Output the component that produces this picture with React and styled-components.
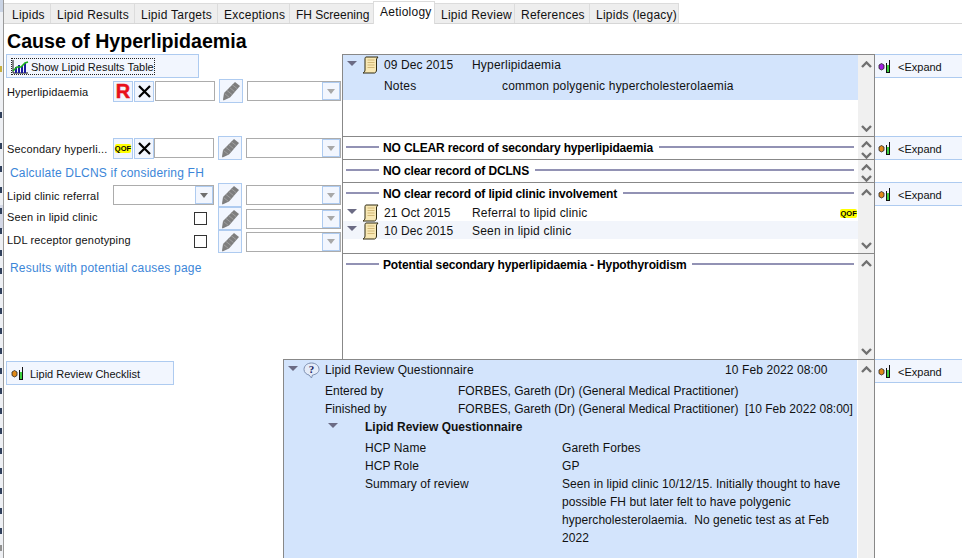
import React from "react";
import styled, { createGlobalStyle } from "styled-components";

const GlobalStyle = createGlobalStyle`
  html, body {
    margin: 0;
    padding: 0;
    background: #fff;
  }
  body {
    font-family: "Liberation Sans", Arial, sans-serif;
    font-size: 12px;
    color: #111;
  }
`;

const Page = styled.div`
  display: flex;
  width: 962px;
  height: 558px;
  overflow: hidden;
  background: #fff;
`;

const Strip = styled.div`
  width: 4px;
  height: 558px;
  box-sizing: border-box;
  overflow: hidden;
  background: #eef0f4;
  border-right: 1px solid #9a9a9a;
  flex: none;

  svg {
    display: block;
  }
`;

const Main = styled.div`
  flex: 1;
  display: flex;
  flex-direction: column;
  min-width: 0;
`;

const TabBar = styled.div`
  display: flex;
  align-items: flex-end;
  height: 24px;
  box-sizing: border-box;
  border-bottom: 1px solid #d6d6d6;
`;

const Tab = styled.div`
  height: 20px;
  width: ${(p) => p.$w}px;
  box-sizing: border-box;
  padding-left: ${(p) => p.$pad || 6}px;
  padding-top: 4px;
  background: #eeeeee;
  border: 1px solid #dcdcdc;
  border-left: none;
  border-bottom: none;
  font-size: 12px;
  letter-spacing: ${(p) => p.$spacing ?? 0.25}px;
  white-space: nowrap;
  line-height: 14px;

  ${(p) =>
    p.$active &&
    `
    height: 23px;
    margin-bottom: -1px;
    padding-top: 3px;
    background: #fff;
    box-shadow: -1px 0 0 #dcdcdc;
    position: relative;
  `}
`;

const TopArea = styled.div`
  display: flex;
  height: 335px;
`;

const LeftCol = styled.div`
  width: 338px;
  flex: none;
  padding-left: 2px;
  box-sizing: border-box;
`;

const Title = styled.h1`
  margin: 7px 0 2px 1px;
  height: 21px;
  font-size: 19.6px;
  line-height: 21px;
  font-weight: 700;
  color: #000;
`;

const ToolButton = styled.div`
  display: flex;
  align-items: center;
  gap: 6px;
  width: ${(p) => p.$w}px;
  height: 24px;
  box-sizing: border-box;
  padding: 1px 0 0 4px;
  background: #f2f6fe;
  border: 1px solid #aecbf0;
  font-size: 11px;
  white-space: nowrap;
`;

const FocusBox = styled.div`
  display: flex;
  align-items: center;
  gap: 2px;
  height: 15px;
  border: 1px dotted #222;
`;

const FieldRow = styled.div`
  display: flex;
  align-items: center;
  height: ${(p) => p.$h || 24}px;
  margin-top: ${(p) => p.$top || 0}px;
`;

const FieldLabel = styled.div`
  width: 106px;
  flex: none;
  padding-left: 1px;
  padding-top: ${(p) => (p.$lift ? 0 : 2)}px;
  padding-bottom: ${(p) => p.$lift || 0}px;
  font-size: 11px;
  letter-spacing: 0.16px;
  white-space: nowrap;
`;

const SquareButton = styled.div`
  width: 20px;
  height: 21px;
  box-sizing: border-box;
  margin-right: ${(p) => (p.$flush ? 0 : 1)}px;
  flex: none;
  display: flex;
  align-items: center;
  justify-content: center;
  background: #f2f6fe;
  border: 1px solid #aecbf0;
`;

const RedLetter = styled.span`
  font-size: 20px;
  line-height: 18px;
  font-weight: 700;
  color: #e8101c;
  -webkit-text-stroke: 0.5px #e8101c;
`;

const TextInput = styled.div`
  width: ${(p) => p.$w || 60}px;
  height: 20px;
  box-sizing: border-box;
  background: #fff;
  border: 1px solid #acacac;
  flex: none;
`;

const PenButton = styled.div`
  width: 24px;
  height: ${(p) => p.$h || 24}px;
  box-sizing: border-box;
  flex: none;
  margin: 0 4px;
  display: flex;
  align-items: center;
  justify-content: center;
  background: #f2f6fe;
  border: 1px solid #aecbf0;
`;

const SelectBox = styled.div`
  width: ${(p) => p.$w || 95}px;
  height: 20px;
  box-sizing: border-box;
  background: #fff;
  border: 1px solid #acacac;
  flex: none;
  display: flex;
  justify-content: flex-end;
`;

const SelectArrow = styled.div`
  width: 16px;
  display: flex;
  align-items: center;
  justify-content: center;
  background: #f2f6fe;
  border: 1px solid #aecbf0;

  &::after {
    content: "";
    border-left: 4px solid transparent;
    border-right: 4px solid transparent;
    border-top: 5px solid ${(p) => (p.$dark ? "#6f6f6f" : "#a8a8a8")};
  }
`;

const LinkText = styled.div`
  margin: ${(p) => p.$margin};
  padding-left: 4px;
  height: 16px;
  line-height: 16px;
  font-size: 12px;
  letter-spacing: 0.2px;
  color: #3c86d8;
`;

const CheckBox = styled.div`
  width: 13px;
  height: 13px;
  box-sizing: border-box;
  margin-left: 81px;
  margin-right: 7px;
  border: 1px solid #333;
  background: #fff;
  flex: none;
`;

const Stack = styled.div`
  flex: 1;
  display: flex;
  flex-direction: column;
  padding-top: 30px;
  min-width: 0;
`;

const SectionRow = styled.div`
  display: flex;
  height: ${(p) => p.$h}px;
`;

const Pane = styled.div`
  width: 533px;
  flex: none;
  box-sizing: border-box;
  display: flex;
  border-left: 1px solid #888;
  border-right: 1px solid #888;
  border-top: 1px solid #888;
`;

const PaneBody = styled.div`
  flex: 1;
  min-width: 0;
  overflow: hidden;
`;

const ScrollCol = styled.div`
  width: 16px;
  flex: none;
  display: flex;
  flex-direction: column;
  justify-content: space-between;
  align-items: center;
  box-sizing: border-box;
  padding: ${(p) => (p.$tight ? "4px 0 0" : "6px 0 4px")};
  background: #f0f0f0;
`;

const Side = styled.div`
  flex: 1;
  min-width: 0;
`;

const ExpandButton = styled.div`
  display: flex;
  align-items: center;
  gap: 7px;
  height: 24px;
  box-sizing: border-box;
  padding: 1px 0 0 3px;
  background: #f2f6fe;
  border-top: 1px solid #aecbf0;
  border-bottom: 1px solid #aecbf0;
  font-size: 11px;
  color: #111;
`;

const RecordBlock = styled.div`
  background: #d3e4fc;
  height: 45px;
`;

const Line = styled.div`
  display: flex;
  align-items: center;
  height: ${(p) => p.$h || 18}px;
  box-sizing: border-box;
  padding-top: ${(p) => p.$nudge || 0}px;
  background: ${(p) => p.$bg || "transparent"};
  font-size: 12px;
  letter-spacing: ${(p) => p.$spacing ?? 0.2}px;
  white-space: nowrap;

  svg {
    flex: none;
  }
`;

const Caret = styled.span`
  width: 0;
  height: 0;
  flex: none;
  margin: ${(p) => p.$margin || "0 5px 4px 4px"};
  border-left: 5px solid transparent;
  border-right: 5px solid transparent;
  border-top: 5px solid #6b6b84;
`;

const DateCell = styled.span`
  width: 88px;
  flex: none;
  margin-left: 5px;
  letter-spacing: 0.1px;
`;

const NoteLabel = styled.span`
  width: 118px;
  flex: none;
  margin-left: 41px;
`;

const Heading = styled.div`
  display: flex;
  align-items: center;
  gap: 4px;
  height: 22px;
  padding: 0 4px 0 3px;
  font-size: 12px;
  font-weight: 700;
  letter-spacing: -0.14px;
  white-space: nowrap;
  color: #000;

  &::after {
    content: "";
    flex: 1;
    height: 2px;
    margin-left: 2px;
    margin-bottom: 2px;
    background: #9292b4;
  }
`;

const HeadingRule = styled.span`
  width: 33px;
  height: 2px;
  flex: none;
  margin-bottom: 2px;
  background: #9292b4;
`;

const QofBadge = styled.span`
  display: inline-block;
  height: 9px;
  line-height: 9px;
  margin-left: ${(p) => (p.$end ? "auto" : "0")};
  margin-right: ${(p) => (p.$end ? "1px" : "0")};
  background: #ffff00;
  border-radius: 2px;
  font-size: 7.5px;
  font-weight: 700;
  letter-spacing: 0.1px;
  color: #000;
`;

const BottomArea = styled.div`
  display: flex;
  flex: 1;
  min-height: 0;
`;

const BottomLeft = styled.div`
  width: 279px;
  flex: none;
  padding: 2px 0 0 2px;
  box-sizing: border-box;
`;

const QuestionPane = styled(Pane)`
  width: 592px;
`;

const QuestionBody = styled(PaneBody)`
  background: #d3e4fc;
  margin-right: 1px;
  padding-top: 1px;
`;

const QLine = styled(Line)`
  padding-left: ${(p) => p.$pad || 41}px;
`;

const QLabel = styled.span`
  width: ${(p) => p.$w}px;
  flex: none;
  margin-left: ${(p) => p.$left || 0}px;
`;

const QParagraph = styled.div`
  display: flex;
  padding-left: 81px;
  font-size: 12px;
  letter-spacing: 0.06px;
  line-height: 18px;
`;

const QText = styled.div`
  width: 285px;
`;

const ChartIcon = () => (
  <svg width="17" height="14" viewBox="0 0 17 14">
    <path d="M1 0v13h15" stroke="#111" fill="none" />
    <path d="M4 7v6M7 5v8M10 6v7M13 3v10" stroke="#1a1a9c" strokeWidth="2" />
    <path d="M1 11l4-4 4 0 4-4 3-1" stroke="#18b018" strokeWidth="1.5" fill="none" />
  </svg>
);

const CrossIcon = () => (
  <svg width="13" height="13" viewBox="0 0 13 13">
    <path d="M1 1l11 11M12 1L1 12" stroke="#000" strokeWidth="2.2" />
  </svg>
);

const PenIcon = () => (
  <svg width="19" height="20" viewBox="0 0 19 20">
    <path d="M13 1l5 4-10 11.500-6.500 3-.5-1 1-6.500z" fill="#7e7e7e" />
    <path d="M2.500 12.500l5 4M5 9.500l5 4M7.500 6.500l5 4M10 3.500l5 4" stroke="#a3a3a3" strokeWidth="0.9" />
  </svg>
);

const ScrollIcon = () => (
  <svg width="17" height="18" viewBox="0 0 17 18">
    <path d="M4 1h12l-1.500 2v11c0 1.500-1 3-2 3H1c1-.5 2-1.500 2-3V3c0-1 .4-2 1-2z" fill="#f8e8b4" stroke="#2e2a12" />
    <path d="M5.500 4h7M5.500 6.500h7M5.500 9h7M5.500 11.500h7" stroke="#d2b878" />
  </svg>
);

const VialIcon = ({ color }) => (
  <svg width="13" height="13" viewBox="0 0 13 13">
    <path d="M3.500 3.500l2.500 1.500v3.500L3.500 10 1 8.500V5z" fill={color} stroke="#222" strokeWidth="0.8" />
    <path d="M8.500 3v9M11.500 0v12.500" stroke="#111" />
    <path d="M10 5v7" stroke="#3ed03e" strokeWidth="2" />
    <path d="M8 12.500h4" stroke="#111" />
  </svg>
);

const QuestionIcon = () => (
  <svg width="17" height="17" viewBox="0 0 17 17">
    <path d="M8.500 1C4.500 1 1 3.500 1 7.500c0 3 2.500 5 5 5.500l2.500 3 1-3c3.500-.5 6.500-2.500 6.500-5.500C16 3.500 12.500 1 8.500 1z" fill="#e4ebf8" stroke="#7d8fb0" />
    <text x="8.500" y="11" fontSize="11" fontWeight="700" textAnchor="middle" fontFamily="Liberation Serif, serif" fill="#16205e">?</text>
  </svg>
);

const Chevron = ({ down }) => (
  <svg width="11" height="7" viewBox="0 0 11 7">
    <path d={down ? "M1 1l4.500 4.500L10 1" : "M1 6l4.500-4.500L10 6"} stroke="#707070" strokeWidth="2.4" fill="none" />
  </svg>
);

// slivers of the window behind, showing down the left edge
const behindMarks = [
  [66, "#c8b040"], [112, "#30405c"], [143, "#30405c"], [166, "#30405c"], [187, "#30405c"],
  [208, "#30405c"], [228, "#30405c"], [250, "#30405c"], [268, "#30405c"], [288, "#30405c"],
  [308, "#30405c"], [328, "#30405c"], [348, "#30405c"], [368, "#30405c"], [388, "#30405c"],
  [408, "#30405c"], [428, "#30405c"], [448, "#30405c"], [468, "#30405c"], [488, "#30405c"],
  [508, "#30405c"], [528, "#30405c"], [545, "#909090"],
];

const BehindWindow = () => (
  <svg width="3" height="558" viewBox="0 0 3 558">
    <rect x="0" y="0" width="3" height="12" fill="#c9d3e4" />
    <rect x="0" y="205" width="3" height="24" fill="#d4d8e6" />
    {behindMarks.map(([y, color]) => (
      <rect key={y} x="0" y={y} width="2" height="6" fill={color} />
    ))}
  </svg>
);

const Scroll = ({ tight, upOnly }) => (
  <ScrollCol $tight={tight}>
    <Chevron />
    {!upOnly && <Chevron down />}
  </ScrollCol>
);

const Expand = ({ color = "#e08a1a" }) => (
  <ExpandButton>
    <VialIcon color={color} />
    <span>&lt;Expand</span>
  </ExpandButton>
);

const tabs = [
  { label: "Lipids", w: 47, pad: 8 },
  { label: "Lipid Results", w: 84 },
  { label: "Lipid Targets", w: 83 },
  { label: "Exceptions", w: 72 },
  { label: "FH Screening", w: 84, spacing: 0 },
  { label: "Aetiology", w: 61, active: true },
  { label: "Lipid Review", w: 80 },
  { label: "References", w: 75 },
  { label: "Lipids (legacy)", w: 89 },
];

function Dropdown({ w }) {
  return (
    <SelectBox $w={w}>
      <SelectArrow />
    </SelectBox>
  );
}

export default function App() {
  return (
    <>
      <GlobalStyle />
      <Page>
        <Strip>
          <BehindWindow />
        </Strip>
        <Main>
          <TabBar>
            {tabs.map((t) => (
              <Tab key={t.label} $w={t.w} $active={t.active} $pad={t.pad} $spacing={t.spacing}>
                {t.label}
              </Tab>
            ))}
          </TabBar>
          <TopArea>
            <LeftCol>
              <Title>Cause of Hyperlipidaemia</Title>
              <ToolButton $w={193}>
                <FocusBox>
                  <ChartIcon />
                  <span>Show Lipid Results Table</span>
                </FocusBox>
              </ToolButton>
              <FieldRow $top={1}>
                <FieldLabel>Hyperlipidaemia</FieldLabel>
                <SquareButton>
                  <RedLetter>R</RedLetter>
                </SquareButton>
                <SquareButton>
                  <CrossIcon />
                </SquareButton>
                <TextInput />
                <PenButton>
                  <PenIcon />
                </PenButton>
                <Dropdown w={94} />
              </FieldRow>
              <FieldRow $top={33}>
                <FieldLabel>Secondary hyperli...</FieldLabel>
                <SquareButton>
                  <QofBadge>QOF</QofBadge>
                </SquareButton>
                <SquareButton $flush>
                  <CrossIcon />
                </SquareButton>
                <TextInput />
                <PenButton>
                  <PenIcon />
                </PenButton>
                <Dropdown />
              </FieldRow>
              <LinkText $margin="5px 0 2px">Calculate DLCNS if considering FH</LinkText>
              <FieldRow>
                <FieldLabel>Lipid clinic referral</FieldLabel>
                <SelectBox $w={101}>
                  <SelectArrow $dark />
                </SelectBox>
                <PenButton>
                  <PenIcon />
                </PenButton>
                <Dropdown />
              </FieldRow>
              <FieldRow $h={23}>
                <FieldLabel $lift={4}>Seen in lipid clinic</FieldLabel>
                <CheckBox />
                <PenButton $h={23}>
                  <PenIcon />
                </PenButton>
                <Dropdown />
              </FieldRow>
              <FieldRow $h={23}>
                <FieldLabel $lift={4}>LDL receptor genotyping</FieldLabel>
                <CheckBox />
                <PenButton $h={23}>
                  <PenIcon />
                </PenButton>
                <Dropdown />
              </FieldRow>
              <LinkText $margin="7px 0 0">Results with potential causes page</LinkText>
            </LeftCol>
            <Stack>
              <SectionRow $h={82}>
                <Pane>
                  <PaneBody>
                    <RecordBlock>
                      <Line $h={20}>
                        <Caret />
                        <ScrollIcon />
                        <DateCell>09 Dec 2015</DateCell>
                        <span>Hyperlipidaemia</span>
                      </Line>
                      <Line $h={22}>
                        <NoteLabel>Notes</NoteLabel>
                        <span>common polygenic hypercholesterolaemia</span>
                      </Line>
                    </RecordBlock>
                  </PaneBody>
                  <Scroll />
                </Pane>
                <Side>
                  <Expand color="#a020e0" />
                </Side>
              </SectionRow>
              <SectionRow $h={23}>
                <Pane>
                  <PaneBody>
                    <Heading>
                      <HeadingRule />
                      NO CLEAR record of secondary hyperlipidaemia
                    </Heading>
                  </PaneBody>
                  <Scroll tight />
                </Pane>
                <Side>
                  <Expand />
                </Side>
              </SectionRow>
              <SectionRow $h={23}>
                <Pane>
                  <PaneBody>
                    <Heading>
                      <HeadingRule />
                      NO clear record of DCLNS
                    </Heading>
                  </PaneBody>
                  <Scroll tight />
                </Pane>
                <Side />
              </SectionRow>
              <SectionRow $h={71}>
                <Pane>
                  <PaneBody>
                    <Heading>
                      <HeadingRule />
                      NO clear record of lipid clinic involvement
                    </Heading>
                    <Line $h={16}>
                      <Caret />
                      <ScrollIcon />
                      <DateCell>21 Oct 2015</DateCell>
                      <span>Referral to lipid clinic</span>
                      <QofBadge $end>QOF</QofBadge>
                    </Line>
                    <Line $h={18} $nudge={1} $bg="#f2f5fb">
                      <Caret />
                      <ScrollIcon />
                      <DateCell>10 Dec 2015</DateCell>
                      <span>Seen in lipid clinic</span>
                    </Line>
                  </PaneBody>
                  <Scroll />
                </Pane>
                <Side>
                  <Expand />
                </Side>
              </SectionRow>
              <SectionRow $h={106}>
                <Pane>
                  <PaneBody>
                    <Heading>
                      <HeadingRule />
                      Potential secondary hyperlipidaemia - Hypothyroidism
                    </Heading>
                  </PaneBody>
                  <Scroll />
                </Pane>
                <Side />
              </SectionRow>
            </Stack>
          </TopArea>
          <BottomArea>
            <BottomLeft>
              <ToolButton $w={168}>
                <VialIcon color="#e08a1a" />
                <span>Lipid Review Checklist</span>
              </ToolButton>
            </BottomLeft>
            <QuestionPane>
              <QuestionBody>
                <Line $h={18} $spacing={0.1}>
                  <Caret />
                  <QuestionIcon />
                  <QLabel $w={400} $left={5}>Lipid Review Questionnaire</QLabel>
                  <span>10 Feb 2022 08:00</span>
                </Line>
                <QLine $h={21} $nudge={2} $spacing={0.02}>
                  <QLabel $w={133}>Entered by</QLabel>
                  <span>FORBES, Gareth (Dr) (General Medical Practitioner)</span>
                </QLine>
                <QLine $spacing={0.02}>
                  <QLabel $w={133}>Finished by</QLabel>
                  <span>FORBES, Gareth (Dr) (General Medical Practitioner)&nbsp; [10 Feb 2022 08:00]</span>
                </QLine>
                <Line $h={18} $spacing={0}>
                  <Caret $margin="0 27px 4px 44px" />
                  <b>Lipid Review Questionnaire</b>
                </Line>
                <QLine $pad={81} $h={21} $nudge={2} $spacing={0.1}>
                  <QLabel $w={197}>HCP Name</QLabel>
                  <span>Gareth Forbes</span>
                </QLine>
                <QLine $pad={81} $spacing={0.1}>
                  <QLabel $w={197}>HCP Role</QLabel>
                  <span>GP</span>
                </QLine>
                <QParagraph>
                  <QLabel $w={197}>Summary of review</QLabel>
                  <QText>
                    Seen in lipid clinic 10/12/15. Initially thought to have possible FH but later felt to have polygenic
                    hypercholesterolaemia.&nbsp; No genetic test as at Feb 2022
                  </QText>
                </QParagraph>
              </QuestionBody>
              <Scroll upOnly />
            </QuestionPane>
            <Side>
              <Expand />
            </Side>
          </BottomArea>
        </Main>
      </Page>
    </>
  );
}
